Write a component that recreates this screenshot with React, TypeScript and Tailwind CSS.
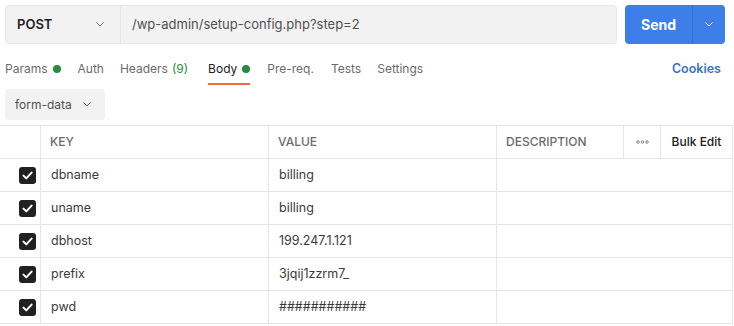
import React from 'react';

const rows = [
  { key: 'dbname', value: 'billing' },
  { key: 'uname', value: 'billing' },
  { key: 'dbhost', value: '199.247.1.121' },
  { key: 'prefix', value: '3jqij1zzrm7_' },
  { key: 'pwd', value: '###########' },
];

const Chevron = ({ className }: { className?: string }) => (
  <svg width="8" height="5" viewBox="0 0 8 5" fill="none" className={className}>
    <path d="M0.75 0.75l3.25 3.25 3.25-3.25" stroke="currentColor" strokeWidth="1" strokeLinecap="round" strokeLinejoin="round" />
  </svg>
);

const CheckBox = () => (
  <div className="w-[17px] h-[17px] rounded-[3px] bg-[#212121] flex items-center justify-center">
    <svg width="11" height="9" viewBox="0 0 11 9" fill="none">
      <path d="M1.5 4.6l2.8 2.8L9.6 1.6" stroke="white" strokeWidth="2" strokeLinecap="round" strokeLinejoin="round" />
    </svg>
  </div>
);

const Dot = () => <span className="inline-block w-[8px] h-[8px] rounded-full bg-[#2a8a3e] ml-[5px]" />;

const App: React.FC = () => {
  return (
    <div className="w-[734px] h-[326px] overflow-hidden bg-white font-['Inter',sans-serif] text-[12px] text-[#212121]">
      {/* request bar */}
      <div className="flex pt-[5px] pl-[5px] pr-[9px] gap-[8px]">
        <div className="flex flex-1 h-[39px] bg-[#f2f2f2] border border-[#e6e6e6] rounded-[4px]">
          <div className="w-[115px] flex items-center justify-between pl-[11px] pr-[16px] border-r border-[#e6e6e6]">
            <span className="font-semibold text-[13px] text-[#212121]">POST</span>
            <Chevron className="text-[#6b6b6b]" />
          </div>
          <div className="flex items-center pl-[11px] text-[13px] text-[#505050]">/wp-admin/setup-config.php?step=2</div>
        </div>
        <div className="flex w-[100px] h-[39px] bg-[#3d7ee9] rounded-[4px] text-white">
          <div className="w-[67px] flex items-center justify-center font-bold text-[14px]">Send</div>
          <div className="flex-1 flex items-center justify-center border-l border-[#2f6fd6]">
            <Chevron className="text-white" />
          </div>
        </div>
      </div>

      {/* tabs */}
      <div className="flex items-start justify-between pl-[5px] pr-[13px] mt-[16px] text-[12px]">
        <div className="flex text-[#6b6b6b]">
          <div className="flex items-center h-[18px]">Params<Dot /></div>
          <div className="ml-[17px] h-[18px] flex items-center">Auth</div>
          <div className="ml-[16px] h-[18px] flex items-center">Headers<span className="ml-[4px] text-[#2a8a3e]">(9)</span></div>
          <div className="ml-[20px] flex flex-col">
            <div className="flex items-center h-[18px] text-[#212121]">Body<Dot /></div>
            <div className="mt-[5px] h-[2px] bg-[#f26b3a]" />
          </div>
          <div className="ml-[17px] h-[18px] flex items-center">Pre-req.</div>
          <div className="ml-[17px] h-[18px] flex items-center">Tests</div>
          <div className="ml-[16px] h-[18px] flex items-center">Settings</div>
        </div>
        <div className="h-[18px] flex items-center font-semibold text-[12.5px] text-[#3872d0]">Cookies</div>
      </div>

      {/* body type */}
      <div className="pl-[5px] mt-[4px]">
        <div className="flex items-center justify-between w-[100px] h-[31px] bg-[#f2f2f2] rounded-[4px] pl-[10px] pr-[14px] text-[12px] text-[#505050]">
          <span>form-data</span>
          <Chevron className="text-[#6b6b6b]" />
        </div>
      </div>

      {/* table */}
      <div className="mt-[5px] w-[733px] border-t border-r border-[#e6e6e6]">
        <div className="flex h-[33px] border-b border-[#e6e6e6] text-[12px] font-medium text-[#6b6b6b]">
          <div className="w-[41px] border-r border-[#e6e6e6]" />
          <div className="w-[228px] border-r border-[#e6e6e6] flex items-center pl-[9px]">KEY</div>
          <div className="w-[228px] border-r border-[#e6e6e6] flex items-center pl-[9px]">VALUE</div>
          <div className="w-[127px] border-r border-[#e6e6e6] flex items-center pl-[9px]">DESCRIPTION</div>
          <div className="w-[37px] border-r border-[#e6e6e6] flex items-center justify-center">
            <svg width="13" height="4" viewBox="0 0 13 4" fill="none">
              <circle cx="2" cy="2" r="1.3" stroke="#6b6b6b" strokeWidth="0.8" />
              <circle cx="6.5" cy="2" r="1.3" stroke="#6b6b6b" strokeWidth="0.8" />
              <circle cx="11" cy="2" r="1.3" stroke="#6b6b6b" strokeWidth="0.8" />
            </svg>
          </div>
          <div className="flex-1 flex items-center justify-center text-[#212121]">Bulk Edit</div>
        </div>
        {rows.map((r) => (
          <div key={r.key} className="flex h-[33px] border-b border-[#e6e6e6] text-[12.5px] text-[#3b3b3b]">
            <div className="w-[41px] border-r border-[#e6e6e6] flex items-center justify-end pr-[4px]">
              <CheckBox />
            </div>
            <div className="w-[228px] border-r border-[#e6e6e6] flex items-center pl-[10px]">{r.key}</div>
            <div className="w-[228px] border-r border-[#e6e6e6] flex items-center pl-[10px]">{r.value}</div>
            <div className="flex-1" />
          </div>
        ))}
      </div>
    </div>
  );
};

export default App;
